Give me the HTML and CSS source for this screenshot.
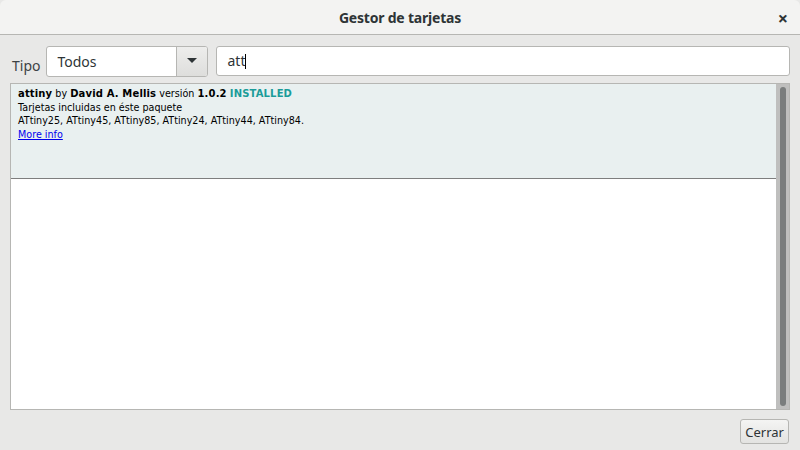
FILE: index.html
```html
<!DOCTYPE html>
<html lang="es">
<head>
  <meta charset="UTF-8">
  <title>Gestor de tarjetas</title>
  <link rel="stylesheet" href="styles.css">
</head>
<body>
  <div class="window">
    <div class="titlebar">
      <span class="title">Gestor de tarjetas</span>
      <span class="close">&#215;</span>
    </div>

    <div class="toolbar">
      <label class="tipo">Tipo</label>
      <div class="combo">
        <span class="combo-text">Todos</span>
        <span class="combo-btn">
          <svg width="10" height="6" viewBox="0 0 10 6"><path d="M0 0 L10 0 L5 5 Z" fill="#2e3436"/></svg>
        </span>
      </div>
      <div class="search">att<span class="caret"></span></div>
    </div>

    <div class="list">
      <div class="items">
        <div class="item">
          <div><b>attiny</b> by <b>David A. Mellis</b> versión <b>1.0.2</b> <b class="installed">INSTALLED</b></div>
          <div>Tarjetas incluidas en éste paquete</div>
          <div>ATtiny25, ATtiny45, ATtiny85, ATtiny24, ATtiny44, ATtiny84.</div>
          <div><a href="#">More info</a></div>
        </div>
      </div>
      <div class="scrollbar"><div class="thumb"></div></div>
    </div>

    <div class="footer">
      <button class="cerrar">Cerrar</button>
    </div>
  </div>
</body>
</html>
```

FILE: styles.css
```css
body {
  margin: 0;
  width: 800px;
  height: 450px;
  overflow: hidden;
  background: #e8e8e7;
  font-family: "Noto Sans", "DejaVu Sans", sans-serif;
  color: #2e3436;
}

.window {
  display: flex;
  flex-direction: column;
  height: 450px;
}

.titlebar {
  height: 34px;
  background: #f3f3f2;
  border-bottom: 1px solid #b6b6b3;
  display: flex;
  align-items: center;
  justify-content: center;
  position: relative;
  border-radius: 6px 6px 0 0;
}

.title {
  font-size: 14px;
  font-weight: bold;
  letter-spacing: -0.2px;
  color: #2e3436;
}

.close {
  position: absolute;
  right: 12px;
  top: 6px;
  font-size: 18px;
  font-weight: bold;
  color: #2e3436;
}

.toolbar {
  display: flex;
  align-items: center;
  padding: 10px 10px 0 12px;
  height: 32px;
}

.tipo {
  font-size: 14px;
  color: #3c4245;
  margin-right: 6px;
  padding-top: 9px;
}

.combo {
  width: 162px;
  height: 31px;
  box-sizing: border-box;
  border: 1px solid #b6b6b3;
  border-radius: 3px;
  background: #fff;
  display: flex;
  align-items: center;
}

.combo-text {
  flex: 1;
  padding-left: 10px;
  font-size: 14px;
}

.combo-btn {
  width: 30px;
  height: 29px;
  border-left: 1px solid #b6b6b3;
  background: linear-gradient(#ededec, #dededc);
  border-radius: 0 2px 2px 0;
  display: flex;
  align-items: center;
  justify-content: center;
}

.search {
  margin-left: 8px;
  flex: 1;
  height: 30px;
  box-sizing: border-box;
  border: 1px solid #b6b6b3;
  border-radius: 3px;
  background: #fff;
  font-family: "Noto Sans", sans-serif;
  font-size: 14px;
  line-height: 28px;
  padding-left: 10px;
}

.caret {
  display: inline-block;
  width: 1px;
  height: 15px;
  background: #000;
  vertical-align: -3px;
}

.list {
  margin: 6px 10px 0 10px;
  height: 327px;
  box-sizing: border-box;
  border: 1px solid #b6b6b3;
  background: #fff;
  display: flex;
}

.items {
  flex: 1;
}

.item {
  height: 95px;
  background: #e9f0f0;
  border-bottom: 1px solid #7e7e7e;
  padding: 3px 0 0 7px;
  box-sizing: border-box;
  font-family: "DejaVu Sans", sans-serif;
  font-size: 9.6px;
  line-height: 13.5px;
  color: #000;
}

.item b {
  font-weight: bold;
  font-size: 10px;
  letter-spacing: 0.15px;
}

.installed {
  color: #1b9c99;
}

.item a {
  color: #0000ee;
  text-decoration: underline;
}

.scrollbar {
  width: 13px;
  background: #bfbfbe;
  display: flex;
  justify-content: center;
  padding-top: 3px;
  padding-bottom: 3px;
  box-sizing: border-box;
}

.thumb {
  width: 6px;
  height: 100%;
  border-radius: 3px;
  background: #7a7d7d;
}

.footer {
  display: flex;
  justify-content: flex-end;
  padding: 9px 11px 0 0;
}

.cerrar {
  font-family: "Noto Sans", sans-serif;
  font-size: 13px;
  color: #2e3436;
  height: 25px;
  padding: 0 4px;
  border: 1px solid #b6b6b3;
  border-radius: 3px;
  background: linear-gradient(#f4f4f3, #e3e3e1);
}
```
